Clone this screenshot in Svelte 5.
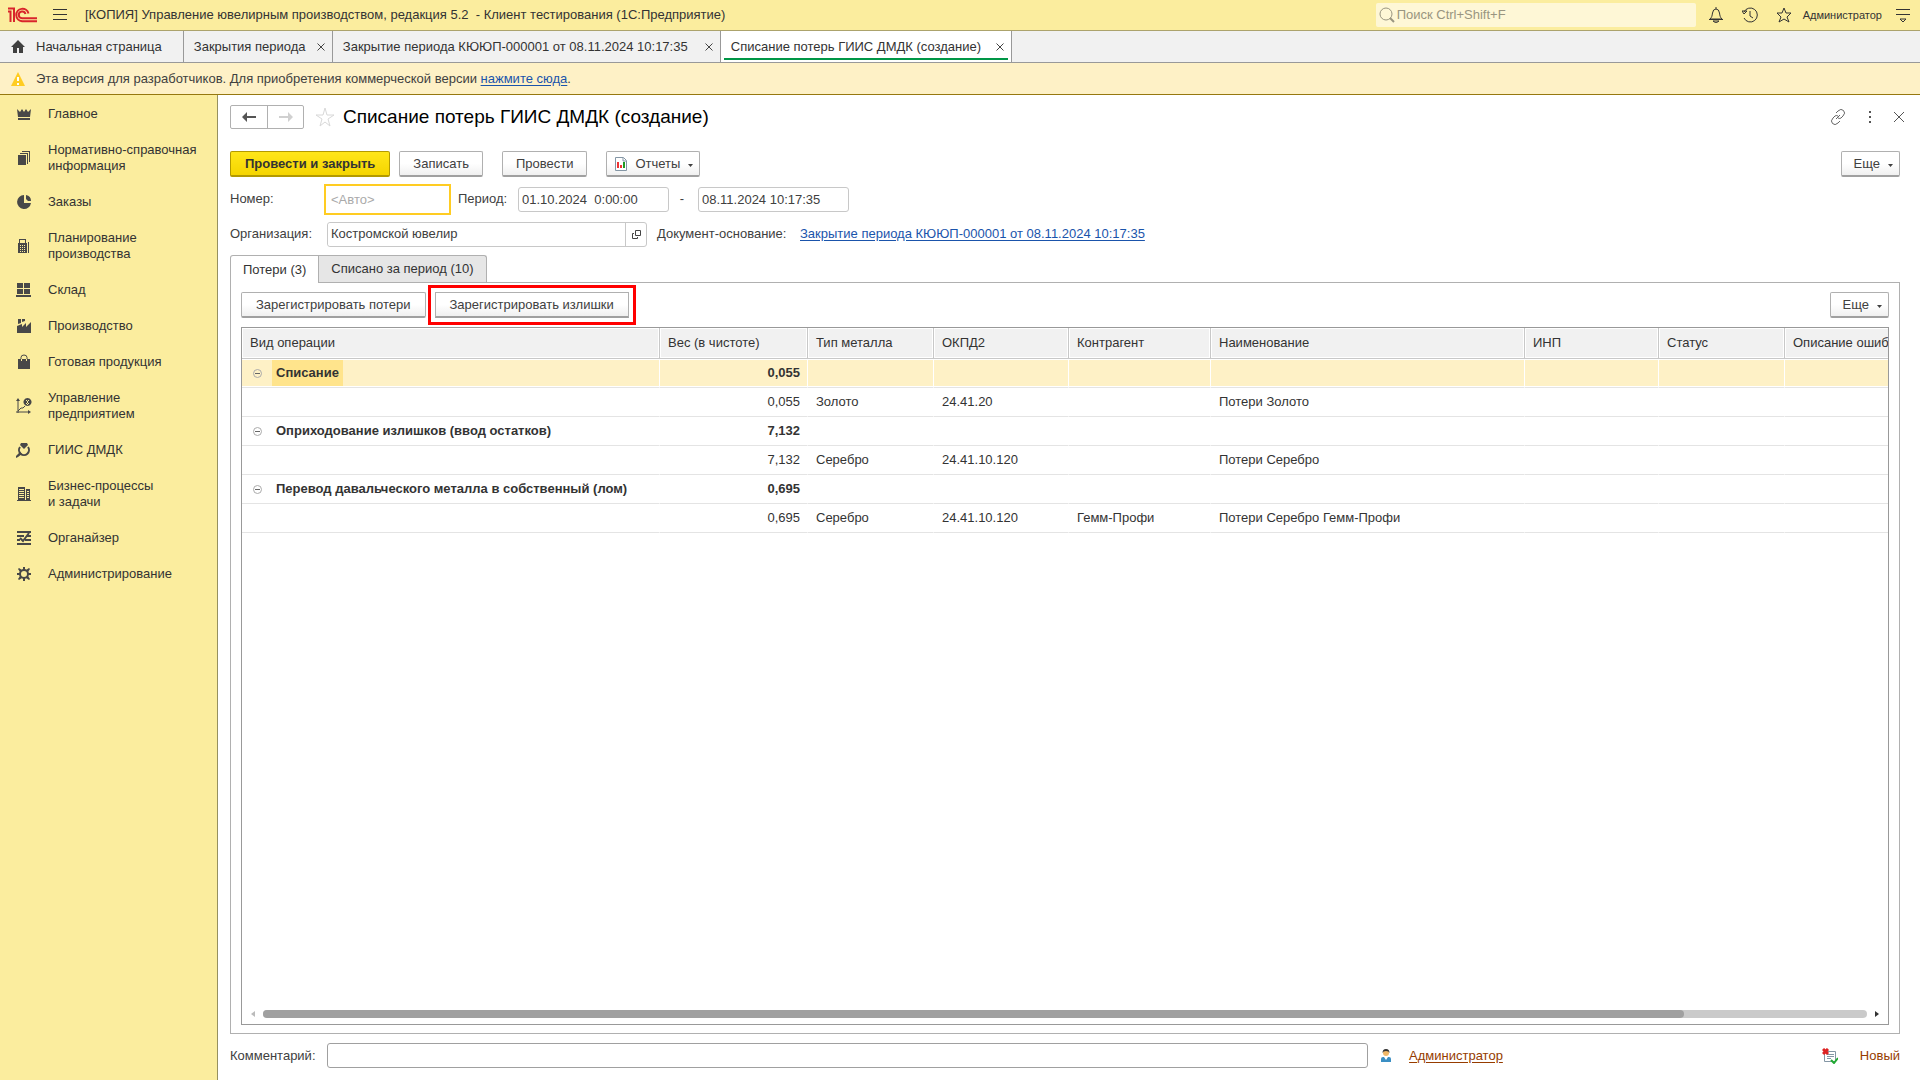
<script>
  const sections = [
    {
      name: 'Главное',
      fill: 'M1 3l3 3 2-3 2 3 2-3 2 3 3-3-1 8H2zM2 12h12v2H2z'
    },
    {
      name: 'Нормативно-справочная информация',
      fill: 'M2 5h8v10H2zM4 3h8v11h-1V4H4zM6 1h8v11h-1V2H6z'
    },
    {
      name: 'Заказы',
      fill: 'M8 1a7 7 0 1 0 7 8H8zM10 1a6 6 0 0 1 5 6h-3l-2-2z'
    },
    {
      name: 'Планирование производства',
      fill: 'M3 1h7v4h1v10H2V5h1zM4 2v3h5V2zM4 7v1h1V7zm2 0v1h1V7zm2 0v1h1V7zM4 9v1h1V9zm2 0v1h1V9zm2 0v1h1V9zm-4 2v1h1v-1zm2 0v1h1v-1zm2 0v1h1v-1zM4 13v1h1v-1zm2 0v1h1v-1zm2 0v1h1v-1zM12 4h1v11h-1z'
    },
    {
      name: 'Склад',
      fill: 'M1 1h6v5H1zM8 1h6v5H8zM1 7h6v5H1zM8 7h6v5H8zM0 13h15v2H0z'
    },
    {
      name: 'Производство',
      fill: 'M2 1h3v4l-3 1zM6 1h3v2L6 4zM1 8l5-2v3l4-4v4l5-5v11H1z'
    },
    {
      name: 'Готовая продукция',
      fill: 'M2 5h12v10H2z',
      line: 'M5 5V3.500Q5 1 8 1t3 2.500V5',
      thin: 'M5.500 5v2M10.500 5v2'
    },
    {
      name: 'Управление предприятием',
      fill: 'M2 0l2 3H0zM15 14l-3 2v-4zM11.500 0a4 4 0 1 0 .01 0zM10 2h3v1h-3zM10 5h3v1h-3zM11 2h1v5h-1z',
      line: 'M2 2v13M0 14h13M2 13l3-3h2l2-2'
    },
    {
      name: 'ГИИС ДМДК',
      fill: 'M5 1h6l1 2-4 4-4-4zM0 14l4-4 2 2-4 3-2 1z',
      bold: 'M4 5a5 5 0 1 0 8 0'
    },
    {
      name: 'Бизнес-процессы и\u00a0задачи',
      fill: 'M2 1h7v13H2zM3 3v1h5V3zm0 2v1h5V5zm0 2v1h5V7zm0 2v1h5V9zm0 2v1h5v-1zM10 3h4v11h-4zm1 2v1h2V5zm0 2v1h2V7zm0 2v1h2V9zm0 2v1h2v-1zM1 14h14v1H1z'
    },
    {
      name: 'Органайзер',
      fill: 'M1 1h14v2H1zM1 5h7v2H1zM11 5h4v2h-4zM1 9h3v2H1zM9 9h6v2H9zM1 13h14v2H1z',
      bold: 'M4 8l3 3 6-8'
    },
    {
      name: 'Администрирование',
      fill: 'M7 1h2v3H7zM7 12h2v3H7zM1 7h3v2H1zM12 7h3v2h-3zM3 2l3 2-2 2-2-3zM13 2l1 1-2 3-2-2zM3 14l-1-1 2-3 2 2zM13 14l-3-2 2-2 2 3z',
      bold: 'M4 8a4 4 0 1 0 8 0a4 4 0 1 0-8 0'
    }
  ];

  const windows = [
    { title: 'Закрытия периода', width: 149 },
    { title: 'Закрытие периода КЮЮП-000001 от 08.11.2024 10:17:35', width: 388 },
    { title: 'Списание потерь ГИИС ДМДК (создание)', width: 291, active: true }
  ];

  const columns = [
    { title: 'Вид операции', width: 418 },
    { title: 'Вес (в чистоте)', width: 148 },
    { title: 'Тип металла', width: 126 },
    { title: 'ОКПД2', width: 135 },
    { title: 'Контрагент', width: 142 },
    { title: 'Наименование', width: 314 },
    { title: 'ИНП', width: 134 },
    { title: 'Статус', width: 126 },
    { title: 'Описание ошибки', width: 140 }
  ];

  const rows = [
    { group: 'Списание', weight: '0,055' },
    { weight: '0,055', metal: 'Золото', code: '24.41.20', name: 'Потери Золото' },
    { group: 'Оприходование излишков (ввод остатков)', weight: '7,132' },
    { weight: '7,132', metal: 'Серебро', code: '24.41.10.120', name: 'Потери Серебро' },
    { group: 'Перевод давальческого металла в собственный (лом)', weight: '0,695' },
    { weight: '0,695', metal: 'Серебро', code: '24.41.10.120', partner: 'Гемм-Профи', name: 'Потери Серебро Гемм-Профи' }
  ];

  let selected = $state(0);
  let number = $state('');
  let dateFrom = $state('01.10.2024  0:00:00');
  let dateTo = $state('08.11.2024 10:17:35');
  let organization = $state('Костромской ювелир');
  let comment = $state('');
</script>

{#snippet cross()}
  <svg class="cross" viewBox="0 0 8 8" width="8" height="8"><path d="M0.500 0.500l7 7M7.500 0.500l-7 7" /></svg>
{/snippet}

{#snippet caret()}
  <svg class="caret" width="5" height="3" viewBox="0 0 5 3"><path d="M0 0h5L2.500 3z" fill="#404040" /></svg>
{/snippet}

<div class="app">
  <header class="titlebar">
    <svg class="logo" width="30" height="16" viewBox="0 0 30 16">
      <path d="M0 4.500h2.500V15M0 1.500h6V15M20.500 6.500a6.200 6.200 0 1 0-6.500 7.700h15M17.500 7a3.400 3.400 0 1 0-3.500 4.200h15" />
    </svg>
    <button class="icon menu" aria-label="Меню">
      <svg width="14" height="12" viewBox="0 0 14 12"><path d="M0 .5h14M0 5.500h14M0 10.500h14" /></svg>
    </button>
    <span class="appTitle">[КОПИЯ] Управление ювелирным производством, редакция 5.2&nbsp; - Клиент тестирования (1С:Предприятие)</span>
    <label class="search">
      <svg width="16" height="16" viewBox="0 0 16 16"><circle cx="7" cy="7" r="6" /><path d="M11 11l4 4" stroke-width="2" /></svg>
      <input type="search" placeholder="Поиск Ctrl+Shift+F" aria-label="Поиск" />
    </label>
    <div class="tools">
      <button class="icon" aria-label="Уведомления">
        <svg width="16" height="16" viewBox="0 0 16 16"><path d="M8 0v2M2 12c2-2 2-3 2.500-6Q5 2 8 2t3.500 4c.5 3 .5 4 2.500 6zM1 12.500h14" /><path d="M5 14h6l-3 2z" fill="#333" stroke="none" /></svg>
      </button>
      <button class="icon" aria-label="История">
        <svg width="16" height="16" viewBox="0 0 16 16"><path d="M2 5a7 7 0 1 1 0 6M8 4v5l3 2" /><path d="M0 4h5L2 7z" fill="#333" stroke="none" /></svg>
      </button>
      <button class="icon" aria-label="Избранное">
        <svg width="16" height="16" viewBox="0 0 16 16"><path d="M8 1l2 5h5l-4 4 2 5-5-3-5 3 2-5-4-4h5z" /></svg>
      </button>
    </div>
    <a class="user" href="#user">Администратор</a>
    <button class="icon" aria-label="Сервис">
      <svg width="14" height="14" viewBox="0 0 14 14"><path d="M0 1.500h14M0 6.500h14" /><path d="M4 11h6l-3 3z" fill="#333" stroke="none" /></svg>
    </button>
  </header>

  <nav class="windows">
    <a class="window home" href="#home">
      <svg width="14" height="13" viewBox="0 0 14 13"><path d="M7 0l7 7h-2v6H8V8H6v5H2V7H0z" fill="#404040" /></svg>
      Начальная страница
    </a>
    {#each windows as win}
      <div class="window" class:active={win.active} style="width: {win.width}px">
        <a href="#window">{win.title}</a>
        <button aria-label="Закрыть">{@render cross()}</button>
      </div>
    {/each}
  </nav>

  <div class="notice">
    <svg width="14" height="14" viewBox="0 0 14 14"><path d="M7 0l7 14H0z" fill="#fc2" /><path d="M7 5v4M7 11v2" stroke="#fff" stroke-width="2" /></svg>
    <span>Эта версия для разработчиков. Для приобретения коммерческой версии <a href="#buy">нажмите сюда</a>.</span>
  </div>

  <div class="body">
    <aside>
      {#each sections as section}
        <a class="section" href="#section">
          <svg width="16" height="16" viewBox="0 0 16 16">
            <path d={section.fill} fill="#484848" fill-rule="evenodd" />
            {#if section.line}<path d={section.line} fill="none" stroke="#484848" />{/if}
            {#if section.thin}<path d={section.thin} fill="none" stroke="#fbed9e" />{/if}
            {#if section.bold}<path d={section.bold} fill="none" stroke="#484848" stroke-width="2" />{/if}
          </svg>
          <span>{section.name}</span>
        </a>
      {/each}
    </aside>

    <main>
      <div class="heading">
        <div class="history">
          <button aria-label="Назад"><svg width="14" height="10" viewBox="0 0 14 10"><path d="M0 5l5-5v4h9v2H5v4z" fill="#555" /></svg></button>
          <button aria-label="Вперед"><svg width="14" height="10" viewBox="0 0 14 10"><path d="M14 5L9 0v4H0v2h9v4z" fill="#d0d0d0" /></svg></button>
        </div>
        <svg width="20" height="20" viewBox="0 0 20 20"><path d="M10 1l2 7h7l-6 4 2 7-5-4-5 4 2-7-6-4h7z" fill="none" stroke="#d8d8d8" /></svg>
        <h1>Списание потерь ГИИС ДМДК (создание)</h1>
        <div class="formTools">
          <button aria-label="Получить ссылку">
            <svg width="16" height="16" viewBox="0 0 16 16"><path d="M6 4l2-2q3-3 5.500-.500t-.500 5.500l-2 2q-1 1-3 0M10 12l-2 2q-3 3-5.500 .500t.500-5.500l2-2q1-1 3 0M6 10l4-4" fill="none" stroke="#666" /></svg>
          </button>
          <button aria-label="Другие действия">
            <svg width="2" height="12" viewBox="0 0 2 12"><path d="M0 0h2v2H0zM0 5h2v2H0zM0 10h2v2H0z" fill="#555" /></svg>
          </button>
          <button aria-label="Закрыть">
            <svg width="10" height="10" viewBox="0 0 10 10"><path d="M0 0l10 10M10 0L0 10" stroke="#555" /></svg>
          </button>
        </div>
      </div>

      <div class="commands">
        <button class="btn primary">Провести и закрыть</button>
        <button class="btn">Записать</button>
        <button class="btn apart">Провести</button>
        <button class="btn apart reports">
          <svg width="12" height="14" viewBox="0 0 12 14"><path d="M.5 .5h8l3 3v10H.5z" fill="#fff" stroke="#8496a5" /><path d="M8 1v3h3" fill="none" stroke="#8496a5" /><path d="M2 5h2v6H2zM5 8h2v3H5z" fill="#e33" /><path d="M8 5h2v6H8z" fill="#292" /></svg>
          Отчеты {@render caret()}
        </button>
        <button class="btn more">Еще {@render caret()}</button>
      </div>

      <div class="fields">
        <label class="caption" for="number">Номер:</label>
        <input id="number" class="number" placeholder="<Авто>" bind:value={number} />
        <label class="period" for="dateFrom">Период:</label>
        <input id="dateFrom" class="date" bind:value={dateFrom} />
        <span class="dash">-</span>
        <input class="date" aria-label="Конец периода" bind:value={dateTo} />
      </div>
      <div class="fields">
        <label class="caption" for="organization">Организация:</label>
        <div class="picker">
          <input id="organization" bind:value={organization} />
          <button aria-label="Открыть">
            <svg width="9" height="9" viewBox="0 0 9 9"><path d="M3.500 .5h5v5h-5zM2 3.500H.5v5h5V7" fill="none" stroke="#444" /></svg>
          </button>
        </div>
        <span class="basis">Документ-основание:</span>
        <a href="#basis">Закрытие периода КЮЮП-000001 от 08.11.2024 10:17:35</a>
      </div>

      <div class="tabs">
        <button class="tab current">Потери (3)</button>
        <button class="tab">Списано за период (10)</button>
      </div>

      <section class="panel">
        <div class="commands">
          <button class="btn wide">Зарегистрировать потери</button>
          <button class="btn wide marked">Зарегистрировать излишки</button>
          <button class="btn more">Еще {@render caret()}</button>
        </div>

        <div class="grid">
          <div class="viewport">
            <table>
              <colgroup>
                {#each columns as column}
                  <col style="width: {column.width}px" />
                {/each}
              </colgroup>
              <thead>
                <tr>
                  {#each columns as column}
                    <th>{column.title}</th>
                  {/each}
                </tr>
              </thead>
              <tbody>
                {#each rows as row, index}
                  <tr class:group={row.group} class:selected={index === selected} onclick={() => (selected = index)}>
                    <td class="kind">
                      {#if row.group}
                        <div class="node">
                          <svg width="9" height="9" viewBox="0 0 9 9"><circle cx="4.500" cy="4.500" r="4" fill="none" stroke="#aaa" /><path d="M2 4.500h5" stroke="#666" /></svg>
                          <span>{row.group}</span>
                        </div>
                      {/if}
                    </td>
                    <td class="weight">{row.weight}</td>
                    <td>{row.metal ?? ''}</td>
                    <td>{row.code ?? ''}</td>
                    <td>{row.partner ?? ''}</td>
                    <td>{row.name ?? ''}</td>
                    <td></td>
                    <td></td>
                    <td></td>
                  </tr>
                {/each}
              </tbody>
            </table>
          </div>
          <div class="scroll">
            <svg width="4" height="6" viewBox="0 0 4 6"><path d="M4 0v6L0 3z" fill="#bbb" /></svg>
            <div class="track"><div class="thumb"></div></div>
            <svg width="4" height="6" viewBox="0 0 4 6"><path d="M0 0v6l4-3z" fill="#333" /></svg>
          </div>
        </div>
      </section>

      <footer>
        <label class="caption" for="comment">Комментарий:</label>
        <input id="comment" bind:value={comment} />
        <svg class="person" width="10" height="14" viewBox="0 0 10 14"><path d="M0 13v-3q0-2 2-2h6q2 0 2 2v3z" fill="#3b8fc4" /><path d="M3 8h4l-2 3z" fill="#fff" /><circle cx="5" cy="4" r="3" fill="#f0b869" /><path d="M1.500 4Q1.500 0 5 0t3.500 4Q8 2 5 2T1.500 4z" fill="#333" /></svg>
        <a class="author" href="#author">Администратор</a>
        <svg class="stateIcon" width="16" height="16" viewBox="0 0 16 16"><path d="M2.500 3.500h11v10h-11z" fill="#fff" stroke="#8496a5" /><path d="M5 6.500h7M5 8.500h7M5 10.500h4" stroke="#8496a5" /><path d="M1 1l5 5M6 1L1 6" stroke="#d22" stroke-width="3" /><path d="M9 12l3 3 4-5" fill="none" stroke="#2a3" stroke-width="2" /></svg>
        <span class="state">Новый</span>
      </footer>
    </main>
  </div>
</div>

<style>
  :global(body) {
    font-family: "Liberation Sans", Arial, sans-serif;
    font-size: 13px;
    line-height: 16px;
    color: #404040;
  }

  .app {
    display: flex;
    flex-direction: column;
    height: 100vh;
    overflow: hidden;
    background: #fff;
  }

  .app * {
    box-sizing: border-box;
  }

  svg {
    display: block;
    flex: none;
  }

  button,
  input {
    font: inherit;
    color: inherit;
  }

  button {
    display: flex;
    align-items: center;
    justify-content: center;
    padding: 0;
    border: none;
    background: none;
    white-space: nowrap;
    cursor: pointer;
  }

  a {
    color: #1a54ab;
    text-underline-offset: 2px;
  }

  .titlebar {
    display: flex;
    align-items: center;
    flex: none;
    height: 31px;
    padding: 0 10px 0 8px;
    border-bottom: 1px solid #aca36c;
    background: #fbed9e;
    color: #333;
  }

  .logo path {
    fill: none;
    stroke: #d9252b;
    stroke-width: 2;
  }

  .icon path {
    fill: none;
    stroke: #333;
  }

  .menu {
    margin: 0 18px 0 15px;
  }

  .appTitle {
    flex: 1;
    white-space: nowrap;
  }

  .search {
    display: flex;
    align-items: center;
    width: 320px;
    height: 24px;
    margin: 0 12px;
    padding: 0 3px;
    border-radius: 2px;
    background: #fef7d6;
  }

  .search svg {
    fill: none;
    stroke: #999580;
  }

  .search input {
    flex: 1;
    min-width: 0;
    padding: 0 2px;
    border: none;
    outline: none;
    background: none;
  }

  .search input::placeholder {
    color: #999580;
  }

  .tools {
    display: flex;
    gap: 18px;
  }

  .user {
    margin: 0 14px 0 11px;
    color: #333;
    font-size: 11px;
    text-decoration: none;
  }

  .windows {
    display: flex;
    flex: none;
    height: 32px;
    border-bottom: 1px solid #999;
    background: #f1f1f1;
  }

  .window {
    display: flex;
    align-items: center;
    justify-content: space-between;
    padding: 0 7px 0 10px;
    border-right: 1px solid #999;
    color: #333;
    white-space: nowrap;
    text-decoration: none;
  }

  .window a {
    color: inherit;
    text-decoration: none;
  }

  .home {
    gap: 11px;
    padding: 0 21px 0 11px;
  }

  .window.active {
    position: relative;
    background: #fff;
  }

  .window.active::after {
    content: '';
    position: absolute;
    right: 3px;
    bottom: 2px;
    left: 3px;
    height: 2px;
    background: #009646;
  }

  .cross path {
    stroke: #444;
  }

  .notice {
    display: flex;
    align-items: center;
    gap: 11px;
    flex: none;
    height: 32px;
    padding: 0 11px;
    border-bottom: 1px solid #96780f;
    background: #fef1c6;
  }

  .body {
    display: flex;
    flex: 1;
    min-height: 0;
  }

  aside {
    flex: none;
    width: 218px;
    padding-top: 1px;
    border-right: 1px solid #96905f;
    background: #fbed9e;
  }

  .section {
    display: flex;
    align-items: center;
    gap: 16px;
    padding: 10px 16px;
    color: #333;
    text-decoration: none;
  }

  .section span {
    max-width: 156px;
  }

  main {
    display: flex;
    flex-direction: column;
    flex: 1;
    min-width: 0;
    padding: 10px 20px 12px 12px;
  }

  .heading {
    display: flex;
    align-items: center;
    gap: 8px;
    height: 24px;
    margin-bottom: 22px;
  }

  .history {
    display: flex;
    margin-right: 3px;
    border: 1px solid #b0b0b0;
    border-radius: 2px;
  }

  .history button {
    width: 36px;
    height: 22px;
  }

  .history button + button {
    border-left: 1px solid #b0b0b0;
  }

  h1 {
    flex: 1;
    margin: 0;
    color: #000;
    font-size: 19px;
    font-weight: normal;
    line-height: 24px;
  }

  .formTools {
    display: flex;
    align-items: center;
    gap: 23px;
    margin-right: -4px;
  }

  .commands {
    display: flex;
    gap: 9px;
  }

  .btn {
    gap: 8px;
    height: 26px;
    padding: 0 13px;
    border: 1px solid #b0b0b0;
    border-bottom: 2px solid #a0a0a0;
    border-radius: 2px;
    background: linear-gradient(#fff 50%, #f0f0f0);
  }

  .btn.wide,
  .btn.primary {
    padding: 0 14px;
  }

  .btn.primary {
    border-color: #b39a00;
    background: linear-gradient(#ffe619, #f5d500);
    color: #333;
    font-weight: bold;
  }

  .btn.apart {
    margin-left: 10px;
  }

  .btn.reports {
    padding: 0 6px 0 8px;
  }

  .btn.more {
    margin-left: auto;
    padding: 0 6px 0 12px;
  }

  .caret {
    margin-top: 3px;
  }

  /* the button the instruction points at */
  .btn.marked {
    border-radius: 0;
    outline: 3px solid #f00;
    outline-offset: 4px;
  }

  .fields {
    display: flex;
    align-items: center;
    height: 34px;
    margin-top: 5px;
  }

  .fields + .fields {
    margin-top: 1px;
  }

  .caption {
    flex: none;
    width: 97px;
  }

  .fields input,
  footer input {
    height: 25px;
    padding: 0 3px;
    border: 1px solid #c8c8c8;
    border-radius: 3px;
    outline: none;
    background: #fff;
  }

  .fields .number {
    width: 127px;
    height: 31px;
    margin-left: -3px;
    padding: 0 5px;
    border: 2px solid #fc2;
    border-radius: 0;
  }

  .number::placeholder {
    color: #aaa;
  }

  .period {
    width: 67px;
    padding-left: 7px;
  }

  .fields .date {
    width: 151px;
  }

  .dash {
    width: 29px;
    padding-right: 3px;
    text-align: center;
  }

  .picker {
    display: flex;
    width: 320px;
    height: 25px;
    margin-right: 10px;
    border: 1px solid #c8c8c8;
    border-radius: 3px;
  }

  .picker input {
    flex: 1;
    min-width: 0;
    height: auto;
    border: none;
  }

  .picker button {
    width: 21px;
    border-left: 1px solid #c8c8c8;
  }

  .basis {
    width: 143px;
  }

  .tabs {
    display: flex;
    margin-top: 4px;
  }

  .tab {
    height: 27px;
    padding: 0 12px;
    border: 1px solid #b0b0b0;
    border-bottom: none;
    border-left: none;
    background: #e6e6e6;
    color: #333;
  }

  .tab:last-child {
    border-top-right-radius: 3px;
  }

  .tab.current {
    z-index: 1;
    height: 28px;
    margin-bottom: -1px;
    border-left: 1px solid #b0b0b0;
    border-top-left-radius: 3px;
    background: #fff;
  }

  .panel {
    display: flex;
    flex-direction: column;
    flex: 1;
    min-height: 0;
    padding: 9px 10px 8px;
    border: 1px solid #b0b0b0;
  }

  .grid {
    display: flex;
    flex-direction: column;
    flex: 1;
    min-height: 0;
    margin-top: 9px;
    border: 1px solid #999;
  }

  .viewport {
    flex: 1;
    overflow: hidden;
  }

  table {
    width: 100%;
    border-collapse: separate;
    border-spacing: 0;
    table-layout: fixed;
    color: #333;
  }

  th,
  td {
    overflow: hidden;
    padding: 0 7px 0 8px;
    font-weight: normal;
    text-align: left;
    white-space: nowrap;
  }

  th {
    height: 31px;
    border-right: 1px solid #c8c8c8;
    border-bottom: 1px solid #c8c8c8;
    background: #f1f1f1;
    box-shadow: inset 1px 1px #fff, inset -1px -1px #fff;
  }

  td {
    height: 29px;
    border-right: 1px solid transparent;
    border-bottom: 1px solid #e4e4e4;
  }

  .selected td {
    border-right-color: #fff;
    background: #fef1c6;
    background-clip: padding-box;
    box-shadow: inset 0 1px #fff, inset 0 -1px #fff;
  }

  .group td {
    font-weight: bold;
  }

  td.weight {
    text-align: right;
  }

  td.kind {
    padding: 1px 0;
  }

  .node {
    display: flex;
    align-items: center;
    gap: 10px;
    padding-left: 11px;
  }

  .node span {
    padding: 5px 4px;
  }

  .selected .node span {
    background: #ffe48c;
  }

  .scroll {
    display: flex;
    align-items: center;
    gap: 8px;
    height: 20px;
    padding: 0 9px;
  }

  .track {
    flex: 1;
    height: 8px;
    border-radius: 4px;
    background: #cacaca;
  }

  .thumb {
    width: 88.6%;
    height: 8px;
    border-radius: 4px;
    background: #a0a0a0;
  }

  footer {
    display: flex;
    align-items: center;
    margin-top: 9px;
  }

  footer input {
    flex: 1;
    border-color: #a0a0a0;
  }

  .person {
    margin: 0 18px 0 13px;
  }

  .author,
  .state {
    color: #963c00;
  }

  .stateIcon {
    margin: 0 22px 0 319px;
  }
</style>
